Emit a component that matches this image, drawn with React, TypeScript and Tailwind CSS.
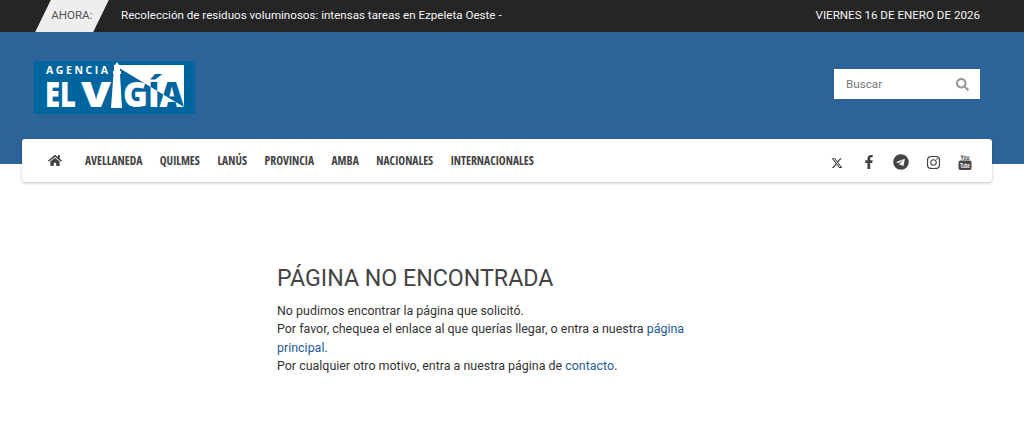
import { FaHome, FaFacebookF, FaTelegram, FaInstagram, FaSearch } from 'react-icons/fa';
import { FaXTwitter } from 'react-icons/fa6';

const sections = ['AVELLANEDA', 'QUILMES', 'LANÚS', 'PROVINCIA', 'AMBA', 'NACIONALES', 'INTERNACIONALES'];

const logoFont = "'Open Sans', sans-serif";

function Logo() {
  return (
    <svg width="161" height="53" viewBox="0 0 161 53" className="block">
      <defs>
        <clipPath id="beam">
          <polygon points="86,4 150,4 150,46 86,7.5" />
        </clipPath>
      </defs>
      <rect width="161" height="53" fill="#00659f" />
      <text x="12" y="12.5" fill="#fff" fontFamily={logoFont} fontWeight="700" fontSize="10.5" textLength="62">AGENCIA</text>
      <text x="11" y="46" fill="#fff" fontFamily={logoFont} fontWeight="800" fontSize="35" textLength="31" lengthAdjust="spacingAndGlyphs">EL</text>
      <text x="47" y="46" fill="#fff" fontFamily={logoFont} fontWeight="800" fontSize="35" textLength="30" lengthAdjust="spacingAndGlyphs">V</text>
      <polygon points="86,4 150,4 150,46 86,7.5" fill="#fff" />
      <text x="89" y="46" fill="#fff" fontFamily={logoFont} fontWeight="800" fontSize="35" textLength="61" lengthAdjust="spacingAndGlyphs">GÍA</text>
      <g clipPath="url(#beam)">
        <text x="89" y="46" fill="#00659f" fontFamily={logoFont} fontWeight="800" fontSize="35" textLength="61" lengthAdjust="spacingAndGlyphs">GÍA</text>
      </g>
      <polygon points="83,1 85,4 86,4 86,10 87,10 87,13 86,13 88,47 77,47 79.5,13 79,13 79,10 80,10 80,4 81,4" fill="#fff" />
    </svg>
  );
}

function YouTubeOld() {
  return (
    <svg width="14" height="18" viewBox="0 0 14 18" className="block">
      <text x="7" y="6.5" textAnchor="middle" fill="#444" fontFamily="'Liberation Sans', sans-serif" fontWeight="700" fontSize="7.5" textLength="9" lengthAdjust="spacingAndGlyphs">You</text>
      <rect x="0.5" y="7.5" width="13" height="9.5" rx="2" fill="#444" />
      <text x="7" y="15" textAnchor="middle" fill="#fff" fontFamily="'Liberation Sans', sans-serif" fontWeight="700" fontSize="7" textLength="10" lengthAdjust="spacingAndGlyphs">Tube</text>
    </svg>
  );
}

export default function App() {
  return (
    <div className="min-h-[432px] overflow-hidden bg-white font-['Roboto',sans-serif]">
      <div className="flex h-8 items-center justify-between bg-[#252525] pl-[43px] pr-[44px] text-[11.6px] text-[#f5f5f5]">
        <div className="flex items-center">
          <div className="flex h-8 w-[58px] -skew-x-[26deg] items-center justify-center bg-[#eeeeee]">
            <span className="skew-x-[26deg] text-[#555555]">AHORA:</span>
          </div>
          <span className="ml-[20px]">Recolección de residuos voluminosos: intensas tareas en Ezpeleta Oeste -</span>
        </div>
        <span>VIERNES 16 DE ENERO DE 2026</span>
      </div>

      <div className="h-[132px] bg-[#2c6499] pl-[34px] pr-[44px] pt-[29px]">
        <div className="flex items-start justify-between">
          <Logo />
          <div className="mt-2 flex h-[30px] w-[146px] items-center justify-between bg-white pl-[12px] pr-[11px] text-[11.7px] text-[#777777]">
            <span className="pt-px">Buscar</span>
            <FaSearch className="h-[13px] w-[13px] text-[#999999]" />
          </div>
        </div>
      </div>

      <div className="relative ml-[22px] mr-[32px] -mt-[25px] flex h-[43px] items-center justify-between rounded-[3px] bg-white pl-[26px] pr-[11px] shadow-[0_1px_3px_rgba(0,0,0,0.25)]">
        <div className="flex items-center text-[#444444]">
          <FaHome className="mr-[23px] h-[15px] w-[14px]" />
          <nav className="flex gap-[17.5px] font-['Open_Sans',sans-serif] text-[11.6px] font-bold [font-stretch:75%]">
            {sections.map((section) => (
              <span key={section}>{section}</span>
            ))}
          </nav>
        </div>
        <div className="mt-[3px] flex items-center text-[#444444]">
          <span className="flex w-8 justify-center"><FaXTwitter className="mt-[2px] h-[12px] w-[12px]" /></span>
          <span className="flex w-8 justify-center"><FaFacebookF className="h-[14px] w-[14px]" /></span>
          <span className="flex w-8 justify-center"><FaTelegram className="h-[16px] w-[16px]" /></span>
          <span className="flex w-8 justify-center"><FaInstagram className="h-[15px] w-[15px]" /></span>
          <span className="flex w-8 justify-center"><YouTubeOld /></span>
        </div>
      </div>

      <main className="ml-[277px] mt-[81px] w-[420px] text-[12.44px] leading-[18.3px] text-[#333333]">
        <h1 className="text-[23.2px] font-normal leading-[30px] text-[#444444]">PÁGINA NO ENCONTRADA</h1>
        <p className="mt-[9px]">No pudimos encontrar la página que solicitó.</p>
        <p>
          Por favor, chequea el enlace al que querías llegar, o entra a nuestra{' '}
          <a className="text-[#1f5a94]">página principal</a>.
        </p>
        <p>
          Por cualquier otro motivo, entra a nuestra página de <a className="text-[#1f5a94]">contacto</a>.
        </p>
      </main>
    </div>
  );
}
